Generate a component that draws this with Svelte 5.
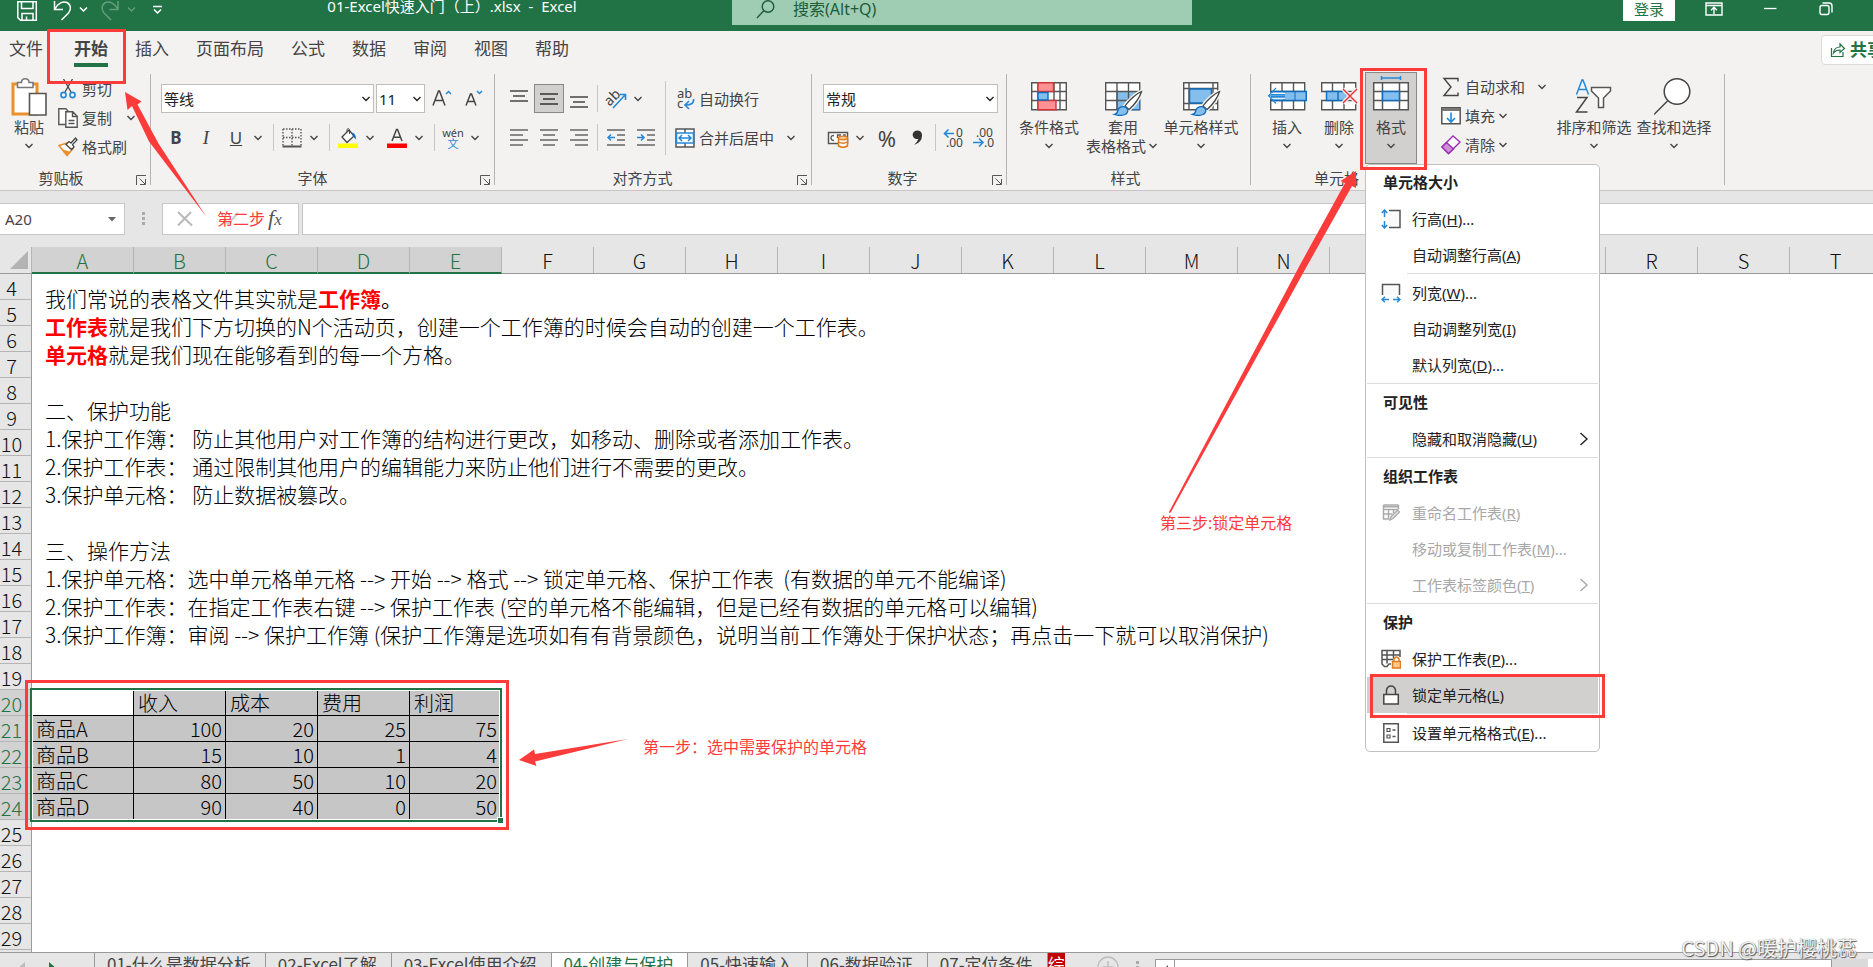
<script>
  const tabs = ['文件', '开始', '插入', '页面布局', '公式', '数据', '审阅', '视图', '帮助'];
  const columns = 'ABCDEFGHIJKLMNOPQRST'.split('');
  const rows = Array.from({ length: 26 }, (_, i) => i + 4);
  const header = ['', '收入', '成本', '费用', '利润'];
  const products = [
    ['商品A', 100, 20, 25, 75],
    ['商品B', 15, 10, 1, 4],
    ['商品C', 80, 50, 10, 20],
    ['商品D', 90, 40, 0, 50]
  ];
  const sheets = ['01-什么是数据分析', '02-Excel了解', '03-Excel使用介绍', '04-创建与保护', '05-快速输入', '06-数据验证', '07-定位条件'];
  const menu = [
    { title: '单元格大小' },
    { label: '行高', key: 'H', more: '...', icon: 'rowHeight' },
    { label: '自动调整行高', key: 'A' },
    { rule: 'short' },
    { label: '列宽', key: 'W', more: '...', icon: 'colWidth' },
    { label: '自动调整列宽', key: 'I' },
    { label: '默认列宽', key: 'D', more: '...' },
    { rule: 'full' },
    { title: '可见性' },
    { label: '隐藏和取消隐藏', key: 'U', sub: true },
    { rule: 'full' },
    { title: '组织工作表' },
    { label: '重命名工作表', key: 'R', icon: 'rename', off: true },
    { label: '移动或复制工作表', key: 'M', more: '...', off: true },
    { label: '工作表标签颜色', key: 'T', sub: true, off: true },
    { rule: 'full' },
    { title: '保护' },
    { label: '保护工作表', key: 'P', more: '...', icon: 'protect' },
    { label: '锁定单元格', key: 'L', icon: 'lock', hot: true },
    { rule: 'short' },
    { label: '设置单元格格式', key: 'E', more: '...', icon: 'cells' }
  ];
</script>

{#snippet chev()}
  <svg class="chev" width="14" height="8" viewBox="0 0 14 8"><path d="M3.5 2L7 5.5 10.500 2" fill="none" stroke="currentColor" stroke-width="1.4" /></svg>
{/snippet}

{#snippet launcher()}
  <button class="launch" aria-label="更多设置"><svg width="12" height="12" viewBox="0 0 12 12" fill="none" stroke="#555"><path d="M1.500 11V1.500H11M4.500 4.500l5.500 5.500M10.500 5v5.500H5" /></svg></button>
{/snippet}

{#snippet lines(y, spans, color)}
  <svg width="18" height="18" viewBox="0 0 18 18" stroke={color} stroke-width="1.500" fill="none">
    {#each spans as s, i}<path d={`M${s[0]} ${y + i * 5}H${s[1]}`} />{/each}
  </svg>
{/snippet}

{#snippet brush()}
  <path d="M38.500 15.500c-5 2-13 9-16.500 14.500l4 3.500c5-4 11-12 12.500-18z" fill="#fff" stroke="#f3f2f1" stroke-width="4" />
  <path d="M38.500 15.500c-5 2-13 9-16.500 14.500l4 3.500c5-4 11-12 12.500-18z" fill="#fff" stroke="#444" stroke-width="1.300" />
  <path d="M11.500 38.500c2.500-.5 3-2 3.500-4.500 1-3 5-4.500 8-2.500 3 2.500 2 5.500-1 7-3 1.200-7.500 1-10.500 0z" fill="#83beec" stroke="#0f6cbd" stroke-width="1.300" />
{/snippet}

<div class="app">
  <header class="titlebar">
    <div class="quick">
      <svg width="172" height="24" viewBox="0 0 172 24" fill="none" stroke="#fff" stroke-width="1.500">
        <path d="M17.800 1.800h18.500v18.500H20.500l-2.700-2.700zM21.500 2v6.500h11.500V2M22 20v-6.500h11V20M26.500 20v-3.500" />
        <path d="M54.500 1v8.500H63M55 9C58 3 63 .8 67 2.500c4 2 4.500 7 1.500 10.500L61.500 20" />
        <path d="M80 7.500l3.500 3.500L87 7.500" />
        <g opacity=".3"><path d="M118 1v8.500h-8.500M117.500 9c-3-6-8-8.200-12-6.500-4 2-4.500 7-1.500 10.500l7 7M128 7.500l3.500 3.500 3.500-3.500" /></g>
        <path d="M153 6.500h9M154 9.500l3.500 3.500 3.500-3.500" />
      </svg>
    </div>
    <div class="title">01-Excel快速入门（上）.xlsx&nbsp; -&nbsp; Excel</div>
    <label class="search">
      <svg width="20" height="20" viewBox="0 0 20 20" fill="none" stroke="#1d5a38" stroke-width="1.400"><circle cx="12" cy="6.500" r="5.800" /><path d="M7.800 10.800L1 18" /></svg>
      <input type="text" placeholder="搜索(Alt+Q)" aria-label="搜索" />
    </label>
    <div class="winbtns">
      <button class="login">登录</button>
      <button aria-label="功能区显示选项"><svg width="18" height="18" viewBox="0 0 18 18" fill="none" stroke="#fff" stroke-width="1.400"><path d="M1 3h16v12H1zM1 5.500h16M9 14V7.500M6 10.200l3-3 3 3" /></svg></button>
      <button aria-label="最小化"><svg width="18" height="18" viewBox="0 0 18 18" stroke="#fff" stroke-width="1.300"><path d="M3 8.500h12.500" /></svg></button>
      <button aria-label="向下还原"><svg width="18" height="18" viewBox="0 0 18 18" fill="none" stroke="#fff" stroke-width="1.400"><rect x="3" y="5.500" width="9" height="9" rx="2" /><path d="M5.500 3h6.500q3 0 3 3v6.500" /></svg></button>
    </div>
  </header>

  <nav class="tabs">
    {#each tabs as t, i}<button class="tab" class:file={i === 0} class:on={i === 1}>{t}</button>{/each}
    <button class="share"><svg width="16" height="16" viewBox="0 0 16 16" fill="none" stroke="#217346" stroke-width="1.200"><path d="M1.500 6v8.500h11.500V10M3.500 11c.5-4 3-6 6.500-6V2l4.500 4.500L10 10.500V8c-3 0-5 1-6.500 3z" /></svg>共享</button>
  </nav>

  <section class="ribbon">
    <div class="group clip">
      <div class="body">
        <button class="big paste">
          <svg width="40" height="40" viewBox="0 0 40 40" fill="none">
            <path d="M4 8h24v30H4z" fill="#fff" stroke="#e8912d" stroke-width="3" />
            <path d="M8.500 11.500v-5h4c0-5 7.500-5 7.500 0h4v5z" fill="#fff" stroke="#777" stroke-width="1.500" />
            <path d="M20.500 17.500h16.500V39H20.500z" fill="#fff" stroke="#555" stroke-width="1.600" />
          </svg>
          <span>粘贴</span>{@render chev()}
        </button>
        <div class="stack">
          <button class="line"><svg width="20" height="20" viewBox="0 0 20 20" fill="none" stroke="#444" stroke-width="1.300"><path d="M5.500 0l7.500 13M14.500 0L7 13" /><g stroke="#2488d8" stroke-width="1.600"><circle cx="5.500" cy="16" r="2.600" /><circle cx="14.500" cy="16" r="2.600" /></g></svg>剪切</button>
          <button class="line"><svg width="20" height="20" viewBox="0 0 20 20" stroke="#555" stroke-width="1.400" fill="#fff"><path d="M.8 16.500V.8h7l2 2v13.700z" /><path d="M7.800 3.800h7l4.400 4.400v11H7.800zM14.500 4v4.500h4.500M10.500 12.500h6M10.500 15.500h6" /></svg>复制<span class="far">{@render chev()}</span></button>
          <button class="line"><svg width="20" height="20" viewBox="0 0 20 20" fill="none"><path d="M1 8.500l8 10 6-7L9.500 6z" fill="#fff" stroke="#e8912d" stroke-width="1.600" /><path d="M3 12l10 3-4 3.500z" fill="#e8912d" /><path d="M8 7.500l3-3 2 1.500L17.500 1l1.500 2-4.500 4.500L16 10l-2.500 2.500z" fill="#fff" stroke="#444" stroke-width="1.300" /></svg>格式刷</button>
        </div>
      </div>
      <footer><span>剪贴板</span>{@render launcher()}</footer>
    </div>
    <i class="bar"></i>

    <div class="group font">
      <div class="body rows">
        <div class="row gap2">
          <span class="sel fontname"><select aria-label="字体"><option>等线</option></select>{@render chev()}</span>
          <span class="sel size"><select aria-label="字号"><option>11</option></select>{@render chev()}</span>
          <button class="ic" aria-label="增大字号"><svg width="24" height="24" viewBox="0 0 24 24" fill="none" stroke="#444" stroke-width="1.500"><path d="M3 18.500L8.500 4h1L15 18.500M5 13.500h8.200" /><path d="M16 7l2.500-2.500L21 7" stroke="#2488d8" /></svg></button>
          <button class="ic" aria-label="减小字号"><svg width="24" height="24" viewBox="0 0 24 24" fill="none" stroke="#444" stroke-width="1.500"><path d="M4 18.500L8.500 7h1L14 18.500M5.500 14.500h7" /><path d="M15 4l2.500 2.500L20 4" stroke="#2488d8" /></svg></button>
        </div>
        <div class="row">
          <button class="ic b">B</button><button class="ic i">I</button><button class="ic u">U</button>{@render chev()}
          <i class="sep"></i>
          <button class="ic" aria-label="边框"><svg width="20" height="20" viewBox="0 0 20 20" fill="none" stroke="#555" stroke-width="1.400"><path d="M1 1h18M1 1v17M19 1v17M10 1v17M1 9.500h18" stroke-dasharray="1.500 1.500" /><path d="M.5 18.500h19" stroke-width="2" /></svg></button>{@render chev()}
          <i class="sep"></i>
          <button class="ic" aria-label="填充颜色"><svg width="20" height="20" viewBox="0 0 20 20" fill="none"><path d="M4 9l7-7 5 6-7 6.500z" fill="#fff" stroke="#444" stroke-width="1.300" /><path d="M9 4V1.500q1.500-2 2.500 0V6" stroke="#444" /><path d="M14 4.500q4 1 4 7l-3-3z" fill="#0f6cbd" /><path d="M0 15.500h20v4.500H0z" fill="#ff0" /></svg></button>{@render chev()}
          <i class="gap"></i>
          <button class="ic" aria-label="字体颜色"><svg width="20" height="20" viewBox="0 0 20 20" fill="none"><path d="M5 13L9.500 1.500h1L15 13M6.500 9.200h7" stroke="#444" stroke-width="1.500" /><path d="M0 15.500h20v4.500H0z" fill="#f00" /></svg></button>{@render chev()}
          <i class="sep"></i>
          <button class="ic wen"><span>wén</span><span>文</span></button>{@render chev()}
        </div>
      </div>
      <footer><span>字体</span>{@render launcher()}</footer>
    </div>
    <i class="bar"></i>

    <div class="group align">
      <div class="body split">
        <div class="rows">
          <div class="row">
            <button class="ic" aria-label="顶端对齐">{@render lines(1, [[0, 18], [3, 15], [0, 18]], '#444')}</button>
            <button class="ic pressed" aria-label="垂直居中">{@render lines(4, [[0, 18], [3, 15], [0, 18]], '#333')}</button>
            <button class="ic" aria-label="底端对齐">{@render lines(7, [[0, 18], [3, 15], [0, 18]], '#444')}</button>
            <i class="sep"></i>
            <button class="ic" aria-label="方向"><svg width="22" height="22" viewBox="0 0 22 22" fill="none"><text x="1" y="16" font-size="14" transform="rotate(-45 6 13)" fill="#444">ab</text><path d="M8 20L20 7M14.500 6.500H20.500V12" stroke="#2488d8" stroke-width="1.600" /></svg></button>{@render chev()}
          </div>
          <div class="row">
            <button class="ic" aria-label="左对齐">{@render lines(1, [[0, 18], [0, 13], [0, 18], [0, 13]], '#666')}</button>
            <button class="ic" aria-label="居中">{@render lines(1, [[0, 18], [3, 15], [0, 18], [3, 15]], '#666')}</button>
            <button class="ic" aria-label="右对齐">{@render lines(1, [[0, 18], [5, 18], [0, 18], [5, 18]], '#666')}</button>
            <i class="sep"></i>
            <button class="ic" aria-label="减少缩进"><svg width="18" height="18" viewBox="0 0 18 18" fill="none" stroke="#666" stroke-width="1.500"><path d="M0 1h18M10 6h8M10 11h8M0 16h18" /><path d="M1 8.500h7M4 5.500l-3 3 3 3" stroke="#2488d8" /></svg></button>
            <button class="ic" aria-label="增加缩进"><svg width="18" height="18" viewBox="0 0 18 18" fill="none" stroke="#666" stroke-width="1.500"><path d="M0 1h18M10 6h8M10 11h8M0 16h18" /><path d="M0 8.500h7M4 5.500l3 3-3 3" stroke="#2488d8" /></svg></button>
          </div>
        </div>
        <i class="tall"></i>
        <div class="rows">
          <button class="line h29"><svg width="20" height="22" viewBox="0 0 20 22" fill="none"><text x="2" y="10" font-size="13" fill="#444">ab</text><text x="2" y="20" font-size="13" fill="#444">c</text><path d="M18.500 11q1 6-8 6M14 13l-4 4 4 4" stroke="#2488d8" stroke-width="1.600" /></svg>自动换行</button>
          <button class="line h29"><svg width="20" height="20" viewBox="0 0 20 20" fill="none"><path d="M1 1h18v18H1zM10 1v4M10 15v4" fill="#fff" stroke="#555" stroke-width="1.500" /><path d="M1.500 5h17v10h-17z" fill="#fff" stroke="#2488d8" stroke-width="1.600" /><path d="M4 10h12M7 7l-3 3 3 3M13 7l3 3-3 3" stroke="#2488d8" stroke-width="1.500" /></svg>合并后居中<span class="near">{@render chev()}</span></button>
        </div>
      </div>
      <footer><span>对齐方式</span>{@render launcher()}</footer>
    </div>
    <i class="bar"></i>

    <div class="group number">
      <div class="body rows">
        <div class="row"><span class="sel fmt"><select aria-label="数字格式"><option>常规</option></select>{@render chev()}</span></div>
        <div class="row">
          <button class="ic" aria-label="会计数字格式"><svg width="22" height="20" viewBox="0 0 22 20" fill="none"><path d="M1.500 4.500h19v11h-19z" fill="#fff" stroke="#555" stroke-width="1.500" /><path d="M7 7.500q-3 0-3 2.500t3 2.500M14 7h-3.500v3M16 7h2v2" stroke="#555" stroke-width="1.300" /><path d="M11.500 10v8q4.500 2.500 9 0v-8" fill="#fff" stroke="#e07b1c" stroke-width="1.500" /><ellipse cx="16" cy="10" rx="4.500" ry="1.800" fill="#f7c48c" stroke="#e07b1c" stroke-width="1.300" /><path d="M11.500 14q4.500 2.500 9 0" stroke="#e07b1c" stroke-width="1.300" /></svg></button>{@render chev()}
          <i class="gap"></i>
          <button class="ic pct" aria-label="百分比样式">%</button>
          <button class="ic" aria-label="千位分隔样式"><svg width="12" height="18" viewBox="0 0 12 18"><path d="M6 1.500a4.300 4.300 0 1 0 1.500 8.300Q6.500 13 3 16q8-2.500 8-9.500Q11 1.500 6 1.500z" fill="#333" /></svg></button>
          <i class="sep"></i>
          <button class="ic" aria-label="增加小数位数"><svg width="22" height="22" viewBox="0 0 22 22" fill="none"><text x="13" y="10" font-size="12" fill="#444">0</text><text x="3" y="20" font-size="12" fill="#444">.00</text><path d="M1.500 6.500H11M5.500 2.500l-4 4 4 4" stroke="#2488d8" stroke-width="1.600" /></svg></button>
          <button class="ic" aria-label="减少小数位数"><svg width="22" height="22" viewBox="0 0 22 22" fill="none"><text x="3" y="10" font-size="12" fill="#444">.00</text><text x="11" y="20" font-size="12" fill="#444">.0</text><path d="M0 15.500h9.500M6 11.500l4 4-4 4" stroke="#2488d8" stroke-width="1.600" /></svg></button>
        </div>
      </div>
      <footer><span>数字</span>{@render launcher()}</footer>
    </div>
    <i class="bar"></i>

    <div class="group styles">
      <div class="body">
        <button class="big w72"><svg width="40" height="40" viewBox="0 0 40 40" fill="none"><path d="M2.700 6.700h34.600v27H2.700zM2.700 15.500h34.600M2.700 24.500h34.600M9 6.700v27M25 6.700v27M31 6.700v27" fill="#fff" stroke="#555" stroke-width="1.400" /><path d="M9 6.700h15.500v8.800H9zM9 24.500h18v9.200H9z" fill="#ff9093" stroke="#d13438" stroke-width="1.400" /><path d="M9 16.500h10v7.500H9z" fill="#83beec" stroke="#0f6cbd" stroke-width="1.400" /></svg><span>条件格式</span>{@render chev()}</button>
        <button class="big w76"><svg width="40" height="40" viewBox="0 0 40 40" fill="none"><path d="M2.700 6.700h34v27h-34z" fill="#fff" stroke="#555" stroke-width="1.400" /><path d="M14 15.500h22.700v18.200H14z" fill="#83beec" stroke="#0f6cbd" /><path d="M14 6.700v27M25.500 6.700v27M2.700 15.500h34M2.700 24.500h34" stroke="#555" stroke-width="1.400" />{@render brush()}</svg><span>套用</span><span class="two">表格格式{@render chev()}</span></button>
        <button class="big w80"><svg width="40" height="40" viewBox="0 0 40 40" fill="none"><path d="M2.700 6.700h34v27h-34zM8 6.700v27M32 6.700v27M2.700 12.500h34M2.700 27.500h34" fill="#fff" stroke="#555" stroke-width="1.400" /><path d="M8.500 13h22v14h-22z" fill="#83beec" stroke="#0f6cbd" stroke-width="1.500" />{@render brush()}</svg><span>单元格样式</span>{@render chev()}</button>
      </div>
      <footer><span>样式</span></footer>
    </div>
    <i class="bar"></i>

    <div class="group cells">
      <div class="body">
        <button class="big w52"><svg width="40" height="40" viewBox="0 0 40 40" fill="none"><path d="M3.700 6.700h34v27h-34zM15 6.700v27M26.500 6.700v27M3.700 15.500h34M3.700 24.500h34" fill="#fff" stroke="#555" stroke-width="1.400" /><path d="M5 15.500h34.300v9H5z" fill="#83beec" stroke="#0f6cbd" stroke-width="1.400" /><path d="M17 15.500v9M28 15.500v9" stroke="#0f6cbd" /><path d="M1 19.800h17" stroke="#fff" stroke-width="6" /><path d="M1.500 19.800H18M9 12l-7.500 7.800L9 27.500M4 18.500h14M4 21.200h14" stroke="#2488d8" stroke-width="1.200" /></svg><span>插入</span>{@render chev()}</button>
        <button class="big w52"><svg width="40" height="40" viewBox="0 0 40 40" fill="none"><path d="M2.700 6.700h34v8.800h-34zM2.700 24.500h34v9.200h-34zM13.500 6.700v8.800M25 6.700v8.800M13.500 24.500v9.200M25 24.500v9.200" fill="#fff" stroke="#555" stroke-width="1.400" /><path d="M7.500 15.500H26l4 4.500-4 4.500H7.500zM19 15.500v9" fill="#83beec" stroke="#0f6cbd" stroke-width="1.400" /><path d="M24 13l14 14M38 13L24 27" stroke="#f3f2f1" stroke-width="4" /><path d="M24 13l14 14M38 13L24 27" stroke="#e8383d" stroke-width="1.500" /></svg><span>删除</span>{@render chev()}</button>
        <button class="big w52 held"><svg width="40" height="40" viewBox="0 0 40 40" fill="none"><path d="M2.700 6.700h34.600v27H2.700zM11.500 6.700v27M28.500 6.700v27M2.700 15.500h34.600M2.700 24.500h34.600" fill="#fff" stroke="#555" stroke-width="1.500" /><path d="M11.500 15.500h17v9h-17z" fill="#83beec" stroke="#0f6cbd" stroke-width="1.500" /><path d="M10.500 2h19M10.500 0v4M29.500 0v4" stroke="#2488d8" stroke-width="1.500" /></svg><span>格式</span>{@render chev()}</button>
      </div>
      <footer><span>单元格</span></footer>
    </div>

    <div class="group edit">
      <div class="body">
        <div class="stack">
          <button class="line"><svg width="20" height="20" viewBox="0 0 20 20" fill="none" stroke="#444" stroke-width="1.400"><path d="M17 4.500V1.500H3l7 8.500-7 8.500h14v-3" /></svg>自动求和<span class="mid">{@render chev()}</span></button>
          <button class="line"><svg width="20" height="20" viewBox="0 0 20 20" fill="none"><path d="M.8 1.800h18.400v16H.8z" fill="#fff" stroke="#555" stroke-width="1.500" /><path d="M1 3.500h18" stroke="#777" stroke-width="3" /><path d="M10 6.500v9M6 12l4 4 4-4" stroke="#2488d8" stroke-width="1.600" /></svg>填充{@render chev()}</button>
          <button class="line"><svg width="20" height="20" viewBox="0 0 20 20" fill="none" stroke="#9b2fae" stroke-width="1.400"><path d="M1 12L12 1l7 6L7.500 18.500z" fill="#fff" /><path d="M1 12l4.500-4.500 7 6.500-5 4.500z" fill="#d08fdb" /></svg>清除{@render chev()}</button>
        </div>
        <button class="big w80"><svg width="40" height="40" viewBox="0 0 40 40" fill="none"><path d="M2.500 18.500L8 4h1l5.500 14.500M4.500 13.500h8" stroke="#2488d8" stroke-width="1.500" /><path d="M3 21.500h10L2.500 36H13.500" stroke="#444" stroke-width="1.500" /><path d="M17.500 11.500h19v3.500l-7 7v9.500h-5V22l-7-7z" fill="#fff" stroke="#555" stroke-width="1.500" /></svg><span>排序和筛选</span>{@render chev()}</button>
        <button class="big w80"><svg width="40" height="40" viewBox="0 0 40 40" fill="none" stroke="#444" stroke-width="1.500"><circle cx="23" cy="15.500" r="12.800" fill="#fff" /><path d="M13.500 25L0 38.500" /></svg><span>查找和选择</span>{@render chev()}</button>
      </div>
      <footer></footer>
    </div>
    <i class="bar"></i>
  </section>

  <section class="formula">
    <div class="namebox"><input value="A20" aria-label="名称框" /><svg width="8" height="5" viewBox="0 0 8 5"><path d="M0 0h8L4 4.500z" fill="#666" /></svg></div>
    <i class="dots"></i>
    <div class="fx">
      <svg width="18" height="16" viewBox="0 0 18 16" stroke="#b9b9b9" stroke-width="2"><path d="M2 1l14 13.500M15 1L2 14.500" /></svg>
      <svg width="18" height="16" viewBox="0 0 18 16" fill="none" stroke="#ccc" stroke-width="2"><path d="M2 9l4 4L16 2" /></svg>
      <button class="fn" aria-label="插入函数">f<small>x</small></button>
    </div>
    <input class="expr" aria-label="编辑栏" />
  </section>

  <main class="sheet">
    <div class="cols">
      <span class="corner"><svg width="18" height="18" viewBox="0 0 18 18"><path d="M18 0v18H0z" fill="#b3b3b3" /></svg></span>
      {#each columns as c, i}<span class:sel5={i < 5} class:first={i === 0}>{c}</span>{/each}
    </div>
    <div class="grid">
      <div class="nums">{#each rows as r}<span class:picked={r >= 20 && r <= 24}>{r}</span>{/each}</div>
      <div class="canvas">
        <div class="note">
          <p>我们常说的表格文件其实就是<b>工作簿</b><strong>。</strong></p>
          <p><b>工作表</b>就是我们下方切换的N个活动页，创建一个工作簿的时候会自动的创建一个工作表。</p>
          <p><b>单元格</b>就是我们现在能够看到的每一个方格。</p>
          <p></p>
          <p>二、保护功能</p>
          <p>1.保护工作簿： 防止其他用户对工作簿的结构进行更改，如移动、删除或者添加工作表。</p>
          <p>2.保护工作表： 通过限制其他用户的编辑能力来防止他们进行不需要的更改。</p>
          <p>3.保护单元格： 防止数据被篡改。</p>
          <p></p>
          <p>三、操作方法</p>
          <p>1.保护单元格：选中单元格单元格 --&gt; 开始 --&gt; 格式 --&gt; 锁定单元格、保护工作表&nbsp; (有数据的单元不能编译)</p>
          <p>2.保护工作表：在指定工作表右键 --&gt; 保护工作表 (空的单元格不能编辑，但是已经有数据的单元格可以编辑)</p>
          <p>3.保护工作簿：审阅 --&gt; 保护工作簿 (保护工作簿是选项如有有背景颜色，说明当前工作簿处于保护状态；再点击一下就可以取消保护)</p>
        </div>
        <div class="range">
          <table>
            <colgroup><col class="ca" /><col class="cb" /><col class="cb" /><col class="cb" /><col class="ce" /></colgroup>
            <tbody>
              <tr>{#each header as h}<th>{h}</th>{/each}</tr>
              {#each products as p}<tr>{#each p as v}<td>{v}</td>{/each}</tr>{/each}
            </tbody>
          </table>
          <i class="handle"></i>
        </div>
      </div>
    </div>
  </main>

  <footer class="sheetbar">
    <div class="navs"><svg width="60" height="15" viewBox="0 0 60 15"><path d="M25 9v14l-8-7z" fill="#bbb" /><path d="M49 9v14l8-7z" fill="#217346" /></svg></div>
    {#each sheets as s, i}<button class="stab" class:cur={i === 3}>{s}</button>{/each}
    <button class="redtab">综</button>
    <svg class="plus" width="22" height="15" viewBox="0 0 22 15" fill="none" stroke="#bbb" stroke-width="1.300"><circle cx="11" cy="14" r="10" /><path d="M11 8v8M5.500 14h11" /></svg>
    <i class="vdots"></i>
    <div class="scroll"><span><svg width="18" height="12" viewBox="0 0 18 12"><path d="M12 5v12L6 11z" fill="#555" /></svg></span></div>
    <i class="endcap"></i>
  </footer>

  <div class="menu" role="menu">
    {#each menu as m}
      {#if m.title}<div class="mtitle">{m.title}</div>
      {:else if m.rule}<div class="rule {m.rule}"></div>
      {:else}
        <button role="menuitem" class="mitem" class:off={m.off} class:hot={m.hot}>
          <span class="mi">
            {#if m.icon}
              <svg width="20" height="20" viewBox="0 0 20 20" fill="none" stroke="#555" stroke-width="1.500">
                {#if m.icon === 'rowHeight'}<path d="M8 1.500h11v17H8" fill="#fafafa" /><path d="M3.500 1v7M3.500 12v7M.8 4l2.700-3 2.700 3M.8 16l2.700 3 2.700-3" stroke="#2488d8" />
                {:else if m.icon === 'colWidth'}<path d="M1.500 12V1.500h17V12" fill="#fafafa" /><path d="M1 16.500h7M12 16.500h7M4 13.800l-3 2.700 3 2.700M16 13.800l3 2.700-3 2.700" stroke="#2488d8" />
                {:else if m.icon === 'rename'}<path d="M2.500 2h15M2.500 2v14h6M2.500 6.500h15M2.500 11h9M7.500 6.500V16M12.500 6.500V10M2.500 3.800h15M17.500 2v4" stroke="#aaa" /><path d="M9 17l1-3.500 6.500-6.500 2 2-6.500 6.500z" fill="#ddd" stroke="#aaa" stroke-width="1.200" />
                {:else if m.icon === 'protect'}<path d="M19 8V1.500H1V15l2.500 2.500H6l2-2.500h2M1 6h18M1 10.500h11M6 1.500v13M12.500 1.500v8" /><path d="M11.500 12.500h8v6.500h-8z" fill="#ffc98b" stroke="#e07b1c" /><path d="M13 12V10q2.500-4 5 0v2" stroke="#e07b1c" />
                {:else if m.icon === 'lock'}<path d="M2.800 9.500h14.500v9.500H2.800z" fill="#fff" stroke="#444" /><path d="M5.500 9V5q1-4 4.500-4t4.500 4v4" stroke="#444" />
                {:else}<path d="M2.800.8h14.500v18.500H2.800z" fill="#fff" /><path d="M6 5.500h3v3H6zM6 12h3v3H6z" stroke-width="1.200" /><path d="M11.500 7h3M11.500 13.500h3" />{/if}
              </svg>
            {/if}
          </span>
          <span>{m.label}(<u>{m.key}</u>){m.more ?? ''}</span>
          {#if m.sub}<svg class="sub" width="10" height="14" viewBox="0 0 10 14" fill="none" stroke="currentColor" stroke-width="1.400"><path d="M1.500 1l6.500 6-6.500 6" /></svg>{/if}
        </button>
      {/if}
    {/each}
  </div>

  <div class="mark m1"></div>
  <div class="mark m2"></div>
  <div class="mark m3"></div>
  <div class="mark m4"></div>
  <svg class="arrows" width="1400" height="800" viewBox="0 0 1400 800" fill="#fc3b3b">
    <path d="M125 92l16.500 9.500-4 3 21 39 48 73.500-57.500-75.500-17-35.500-4.500 4z" />
    <path d="M1356 171v17l-4-2-45 80-136 246q-2 2-2 0L1301 263l44-80-4.500-2z" />
    <path d="M519 760l15-10.500 1 4.500 93-15-93 22.500 1.500 4.500z" />
  </svg>
  <div class="tip t1">第一步：选中需要保护的单元格</div>
  <div class="tip t2">第二步</div>
  <div class="tip t3">第三步:锁定单元格</div>
  <div class="watermark">CSDN @暖护樱桃蕊</div>
</div>

<style>
  :global(body) { margin: 0; overflow: hidden; }
  .app, .app * { box-sizing: border-box; }
  .app { position: relative; display: flex; flex-direction: column; height: 100vh; overflow: hidden; background: #fff; color: #444; font: 15px/20px "Noto Sans", "Noto Sans CJK SC", sans-serif; }
  button, input, select { font: inherit; color: inherit; background: none; border: 0; padding: 0; margin: 0; border-radius: 0; outline: 0; }
  button { white-space: nowrap; }
  svg { display: block; flex: none; }
  i { flex: none; }

  .titlebar { display: flex; align-items: flex-start; flex: none; height: 31px; background: #217346; color: #fff; }
  .quick { flex: 0 0 172px; }
  .title { flex: 0 1 560px; text-align: center; line-height: 12px; white-space: nowrap; }
  .search { display: flex; align-items: flex-start; gap: 17px; flex: 0 1 460px; height: 25px; padding-left: 24px; background: #9fcdb3; color: #1d5a38; font-size: 16px; }
  .search input { flex: 1; min-width: 0; height: 18px; }
  .search input::placeholder { color: #1d5a38; opacity: 1; }
  .winbtns { display: flex; gap: 38px; margin-left: auto; padding-right: 38px; }
  .winbtns button { height: 18px; }
  .winbtns .login { width: 52px; height: 21px; margin-right: -8px; background: #fff; color: #217346; line-height: 16px; padding-bottom: 3px; }

  .tabs { display: flex; gap: 27px; flex: none; height: 41px; padding-left: 9px; background: #f3f2f1; font-size: 17px; }
  .tab { height: 36px; padding-top: 3px; border-bottom: 4px solid transparent; }
  .tab.file { margin-right: 4px; }
  .tab.on { border-color: #217346; font-weight: 700; }
  .share { display: flex; align-items: center; gap: 4px; width: 80px; height: 30px; margin: 4px -28px 0 auto; padding-left: 8px; border: 1px solid #dcdad8; border-radius: 4px; background: #fff; color: #217346; font-weight: 700; }

  .ribbon { display: flex; flex: none; height: 119px; background: #f3f2f1; border-bottom: 1px solid #c8c6c4; }
  .group { display: flex; flex-direction: column; flex: none; }
  .bar { width: 1px; margin: 2px 0 5px; background: #b5b3b1; }
  .body { display: flex; height: 96px; }
  .group footer { display: flex; justify-content: center; align-items: center; position: relative; height: 20px; }
  .launch { position: absolute; right: 3px; bottom: 2px; }
  .clip { width: 150px; }
  .clip .body { padding-left: 8px; }
  .clip footer { padding-right: 28px; }
  .font { width: 343px; padding-left: 10px; }
  .align { width: 316px; padding-left: 9px; }
  .number { width: 194px; padding-left: 11px; }
  .font footer, .align footer { padding-right: 30px; }
  .number footer { padding-right: 24px; }
  .styles { width: 243px; padding-left: 6px; }
  .styles footer { padding-right: 12px; }
  .cells { width: 177px; padding-left: 10px; }
  .cells footer { padding-right: 16px; }
  .edit { width: 296px; padding-left: 8px; }
  .big { display: flex; flex-direction: column; align-items: center; height: 92px; padding-top: 4px; border: 0 solid #8a8886; }
  .big > span { height: 20px; margin-top: 1px; }
  .big > .chev { margin-top: 5px; }
  .big > .two { display: flex; align-items: center; margin-top: -1px; }
  .two .chev { width: 14px; }
  .paste { width: 42px; }
  .w52 { width: 52px; }
  .w72 { width: 72px; }
  .w76 { width: 76px; }
  .w80 { width: 80px; }
  .held { background: #d2d0ce; box-shadow: inset 0 0 0 1px #8a8886; }
  .stack { display: flex; flex-direction: column; padding-top: 2px; }
  .clip .stack { padding-left: 8px; }
  .edit .stack { width: 118px; padding: 0 0 0 5px; }
  .edit .line > .chev { margin-left: -3px; }
  .line { display: flex; align-items: center; gap: 4px; height: 29px; }
  .far { padding-left: 8px; }
  .mid { padding-left: 6px; }
  .near { padding-left: 6px; }
  .rows { display: flex; flex-direction: column; gap: 10px; padding-top: 12px; }
  .split > .rows { height: 96px; }
  .row { display: flex; align-items: center; height: 29px; }
  .gap2 { gap: 2px; }
  .ic { display: flex; align-items: center; justify-content: center; width: 30px; height: 29px; }
  .pressed { background: #d2d0ce; box-shadow: inset 0 0 0 1px #8a8886; }
  .sep { width: 1px; height: 27px; margin: 0 3px 0 8px; background: #c8c6c4; }
  .align .sep, .number .sep { margin: 0 3px; }
  .gap { width: 5px; }
  .tall { width: 1px; height: 74px; margin: 9px 9px 0 4px; background: #c8c6c4; }
  .sel { display: flex; align-items: center; height: 29px; padding-right: 0; background: #fff; border: 1px solid #c0bebc; color: #222; }
  .sel select { flex: 1; min-width: 0; height: 27px; appearance: none; padding-left: 2px; }
  .fontname { width: 213px; }
  .size { width: 49px; }
  .fmt { width: 175px; }
  .b { font-weight: 700; font-size: 17px; }
  .i { font-style: italic; font-size: 19px; font-family: "Liberation Serif", serif; }
  .u { font-size: 17px; text-decoration: underline; }
  .pct { font-size: 22px; }
  .wen { flex-direction: column; font-size: 11px; line-height: 11px; }
  .wen span + span { color: #2488d8; }

  .formula { display: flex; flex: none; height: 56px; padding: 12px 0; background: #e6e6e6; }
  .namebox { display: flex; align-items: center; width: 125px; height: 32px; padding: 0 8px 0 5px; background: #fff; border: 1px solid #c6c6c6; border-left: 0; }
  .namebox input { flex: 1; min-width: 0; }
  .dots { width: 3px; height: 14px; margin: 9px 17px 0; background: repeating-linear-gradient(#aaa 0 3px, transparent 3px 5px); }
  .fx { display: flex; align-items: center; gap: 28px; width: 137px; height: 32px; margin-right: 3px; padding-left: 13px; background: #fff; border: 1px solid #c6c6c6; }
  .fn { font: italic 22px/22px "Liberation Serif", serif; color: #555; }
  .fn small { font-size: 17px; }
  .expr { flex: 1; min-width: 0; height: 32px; background: #fff; border: 1px solid #c6c6c6; border-right: 0; }

  .sheet { display: flex; flex-direction: column; flex: 1; min-height: 0; overflow: hidden; font-family: "Noto Sans CJK SC", sans-serif; color: #111; }
  .cols { display: flex; flex: none; height: 27px; background: #e6e6e6; border-bottom: 1px solid #9b9b9b; font-size: 20px; line-height: 28px; font-weight: 300; }
  .cols span { flex: 0 0 92px; height: 26px; text-align: center; border-right: 1px solid #b5b5b5; }
  .cols .first { flex-basis: 102px; }
  .cols .corner { display: flex; justify-content: flex-end; align-items: flex-end; flex-basis: 32px; padding: 0 3px 4px 0; }
  .cols .sel5 { height: 27px; background: #d2d2d2; color: #217346; border-bottom: 2px solid #217346; }
  .grid { display: flex; flex: 1; min-height: 0; }
  .nums { flex: 0 0 32px; background: #e6e6e6; border-right: 1px solid #9b9b9b; }
  .nums span { display: block; height: 26px; padding-right: 8px; border-bottom: 1px solid #b5b5b5; text-align: center; font-size: 20px; line-height: 27px; font-weight: 300; }
  .nums .picked { background: #d2d2d2; color: #217346; }
  .canvas { flex: 1; min-width: 0; padding-top: 10px; }
  .note { padding-left: 13px; font-size: 21px; line-height: 28px; font-weight: 300; color: #000; white-space: nowrap; }
  .note p { height: 28px; margin: 0; }
  .note b { color: #f00; font-weight: 700; }
  .range { position: relative; width: 472px; margin: 40px 0 0 -2px; padding: 1px; border: 2px solid #217346; background: #fff; }
  table { width: 100%; table-layout: fixed; border-collapse: separate; border-spacing: 0; background: #c6c6c6; font-size: 20px; line-height: 24px; font-weight: 300; color: #000; }
  .ca { width: 101px; }
  .cb { width: 92px; }
  .ce { width: 89px; }
  th, td { height: 26px; padding: 1px 3px 0; border: 0 solid #000; border-width: 0 1px 1px 0; font-weight: 300; text-align: right; }
  th { height: 25px; padding: 0 4px; }
  tr:last-child td { height: 25px; border-bottom: 0; }
  th, td:first-child { text-align: left; }
  th:last-child, td:last-child { border-right: 0; padding-right: 2px; }
  th:first-child { background: #fff; }
  .handle { position: absolute; right: -4px; bottom: -4px; width: 7px; height: 7px; background: #217346; border: 1px solid #fff; }

  .sheetbar { display: flex; flex: none; height: 15px; overflow: hidden; background: #e6e6e6; border-top: 1px solid #9b9b9b; font: 17px/20px "Noto Sans CJK SC", sans-serif; }
  .navs { flex: 0 0 95px; border-right: 1px solid #999; }
  .stab { flex: none; height: 22px; padding: 0 14px 0 12px; border-right: 1px solid #999; }
  .stab.cur { background: #fff; color: #217346; }
  .redtab { flex: none; width: 17px; height: 22px; overflow: hidden; background: #c00000; color: #fff; text-align: left; }
  .plus { margin: 0 17px 0 32px; }
  .vdots { width: 3px; height: 14px; margin: 8px 16px 0 0; background: repeating-linear-gradient(#aaa 0 3px, transparent 3px 5px); }
  .scroll { flex: 1; height: 14px; margin-top: 6px; background: #fff; border: 1px solid #999; }
  .scroll span { display: block; width: 19px; height: 14px; border-right: 1px solid #999; }
  .endcap { width: 41px; height: 14px; margin-top: 6px; background: linear-gradient(90deg, #dadada 36px, #fff 36px); }

  .menu { position: absolute; left: 1365px; top: 164px; width: 235px; padding: 0 1px; background: #fff; border: 1px solid #c0c0c0; border-radius: 5px; color: #222; }
  .mtitle { height: 36px; padding-left: 16px; font-weight: 700; line-height: 34px; }
  .mitem { display: flex; align-items: center; width: 100%; height: 36px; padding: 0 9px 0 14px; text-align: left; }
  .mitem.off { color: #a8a8a8; }
  .mitem.hot { background: #d2d0ce; }
  .mi { flex: 0 0 31px; }
  .sub { margin-left: auto; }
  .rule { height: 2px; border-top: 1px solid #dcdcdc; }
  .rule.short { margin-left: 40px; }

  .mark { position: absolute; border: 3px solid #fc3b3b; }
  .m1 { left: 47px; top: 29px; width: 79px; height: 55px; }
  .m2 { left: 1360px; top: 68px; width: 67px; height: 102px; }
  .m3 { left: 25px; top: 680px; width: 484px; height: 150px; }
  .m4 { left: 1370px; top: 674px; width: 235px; height: 44px; }
  .arrows { position: absolute; left: 0; top: 0; pointer-events: none; }
  .tip { position: absolute; color: #fc3b3b; font-size: 16px; white-space: nowrap; }
  .t1 { left: 643px; top: 737px; }
  .t2 { left: 217px; top: 209px; }
  .t3 { left: 1160px; top: 513px; }
  .watermark { position: absolute; right: 16px; bottom: 7px; color: #f2f2f2; font: 20px/24px "Noto Sans CJK SC", sans-serif; text-shadow: 1px 1px 1px #555, 0 0 1px #777; }
</style>
